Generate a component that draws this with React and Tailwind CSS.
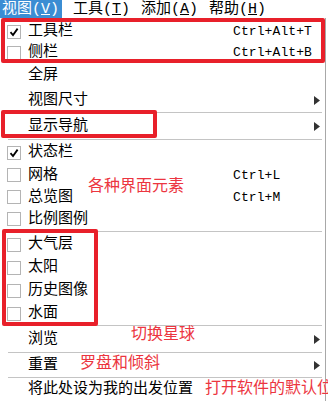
import React from 'react';

const font = { fontFamily: '"Liberation Mono", "Noto Sans CJK SC", monospace' };

function Check({ on }) {
  return (
    <span className="w-[14px] h-[14px] border border-[#b4b4b4] bg-white flex items-center justify-center shrink-0">
      {on && (
        <svg width="10" height="10" viewBox="0 0 10 10">
          <path d="M1.5 5.2 L4 8 L8.6 1.6" fill="none" stroke="#000" strokeWidth="1.8" />
        </svg>
      )}
    </span>
  );
}

function Item({ h, label, check, shortcut, arrow }) {
  return (
    <div className={`flex items-center relative ${h}`}>
      <div className="w-[28px] pl-[7px] flex items-center">
        {check !== undefined && <Check on={check} />}
      </div>
      <div className="w-[205px] text-[15px] text-black leading-none">{label}</div>
      {shortcut && (
        <div className="text-[13px] text-black leading-none tracking-[0.1px]" style={{ fontFamily: '"Liberation Mono", monospace' }}>
          {shortcut}
        </div>
      )}
      {arrow && (
        <svg className="absolute right-[5px]" width="6" height="9" viewBox="0 0 6 9">
          <path d="M0 0 L6 4.5 L0 9 Z" fill="#333" />
        </svg>
      )}
    </div>
  );
}

function Sep() {
  return <div className="h-px bg-[#c4c4c4] ml-[8px] mr-[3px]" />;
}

export default function App() {
  return (
    <div className="w-[328px] h-[401px] bg-white relative overflow-hidden" style={font}>
      {/* menubar */}
      <div className="h-[18px] flex items-stretch text-[15px] leading-none">
        <div className="w-[62px] bg-[#3b8dd3] text-white pl-[2px] flex items-center">
          视图(<span className="underline">V</span>)
        </div>
        <div className="w-[68px] ml-[11px] flex items-center">工具(<span className="underline">T</span>)</div>
        <div className="w-[68px] flex items-center">添加(<span className="underline">A</span>)</div>
        <div className="w-[68px] flex items-center">帮助(<span className="underline">H</span>)</div>
      </div>

      {/* dropdown */}
      <div className="w-[326px] border-r border-[#a8a8a8] pt-[3px] h-[383px]">
        <Item h="h-[21px]" label="工具栏" check={true} shortcut="Ctrl+Alt+T" />
        <Item h="h-[21px]" label="侧栏" check={false} shortcut="Ctrl+Alt+B" />
        <Item h="h-[25px]" label="全屏" />
        <Item h="h-[24px]" label="视图尺寸" arrow />
        <Sep />
        <div className="h-px" />
        <Item h="h-[25px]" label="显示导航" arrow />
        <Sep />
        <div className="h-[1px]" />
        <Item h="h-[23px]" label="状态栏" check={true} />
        <Item h="h-[22px]" label="网格" check={false} shortcut="Ctrl+L" />
        <Item h="h-[22px]" label="总览图" check={false} shortcut="Ctrl+M" />
        <Item h="h-[22px]" label="比例图例" check={false} />
        <div className="h-px" />
        <Sep />
        <div className="h-px" />
        <Item h="h-[23px]" label="大气层" check={false} />
        <Item h="h-[23px]" label="太阳" check={false} />
        <Item h="h-[23px]" label="历史图像" check={false} />
        <Item h="h-[23px]" label="水面" check={false} />
        <Sep />
        <Item h="h-[26px]" label="浏览" arrow />
        <Sep />
        <Item h="h-[24px]" label="重置" arrow />
        <Sep />
        <Item h="h-[23px]" label="将此处设为我的出发位置" />
      </div>

      {/* annotation boxes */}
      <div className="absolute left-[1px] top-[18px] w-[324px] h-[45px] border-[4px] border-[#e8202a] rounded-[2px]" />
      <div className="absolute left-[1px] top-[110px] w-[156px] h-[28px] border-[4px] border-[#e8202a] rounded-[2px]" />
      <div className="absolute left-[2px] top-[229px] w-[96px] h-[97px] border-[4px] border-[#e8202a] rounded-[2px]" />

      {/* annotation labels */}
      <div className="absolute left-[88px] top-[179px] text-[16px] leading-none text-[#ec3540] whitespace-nowrap">各种界面元素</div>
      <div className="absolute left-[131px] top-[327px] text-[16px] leading-none text-[#ec3540] whitespace-nowrap">切换星球</div>
      <div className="absolute left-[80px] top-[356px] text-[16px] leading-none text-[#ec3540] whitespace-nowrap">罗盘和倾斜</div>
      <div className="absolute left-[205px] top-[381px] text-[16px] leading-none text-[#ec3540] whitespace-nowrap">打开软件的默认位置</div>
    </div>
  );
}
